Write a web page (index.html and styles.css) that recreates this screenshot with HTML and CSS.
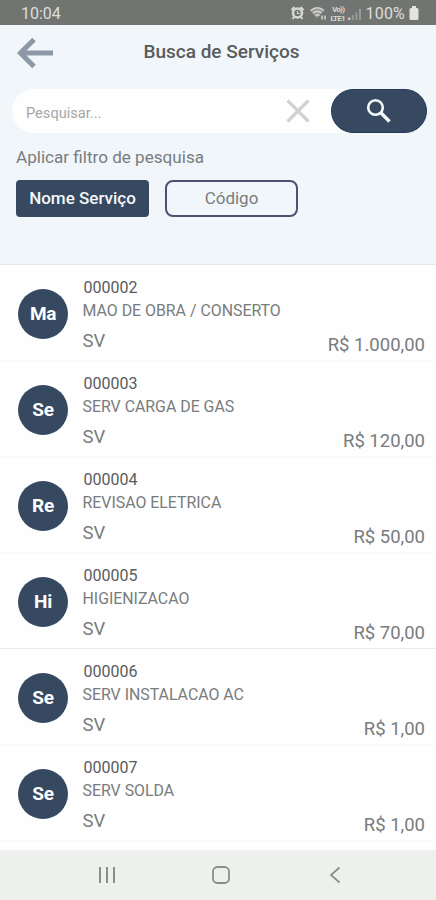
FILE: index.html
```html
<!DOCTYPE html>
<html lang="pt-BR">
<head>
<meta charset="utf-8">
<title>Busca de Serviços</title>
<link rel="stylesheet" href="styles.css">
</head>
<body>
<div class="status">
  <span class="clock">10:04</span>
  <svg class="status-icons" width="74" height="18" viewBox="0 0 74 18" fill="none" stroke="#d6d8d5">
    <circle cx="8.500" cy="10" r="4.500" stroke-width="2.600"/>
    <path d="M2.500 7 5.500 4M14.500 7l-3-3M5 14l-1.500 2M12 14l1.500 2" stroke-width="2"/>
    <path d="M8.500 8v2.500h2" stroke-width="1.200"/>
    <path d="M21.500 7.500q7-5.500 13.500 0M24 10q4.500-3.500 8.500 0M26.500 12.500q2-1.500 4 0" stroke-width="1.400"/>
    <path d="M28 15.500 21.500 8q7-4.500 13 0z" fill="#d6d8d5" stroke="none" opacity=".4"/>
    <path d="M33 12.500v4M36 12.500v4" stroke-width="1.500"/>
    <text class="volte" x="43" y="9" textLength="13">Vo))</text>
    <text class="volte" x="41.500" y="17.500" textLength="15">LTE1</text>
    <path d="M60.200 17v-2.500" stroke-width="2"/>
    <path d="M63.800 17v-5M67.400 17V9.500M71 17V6" stroke-width="2" stroke="#979a96"/>
  </svg>
  <span class="percent">100%</span>
  <svg width="10" height="16" viewBox="0 0 10 16"><path fill="#e2e4e1" d="M3 1h4v2h1q1.500 0 1.500 1.500v9Q9.500 15 8 15H2Q.5 15 .5 13.500v-9Q.5 3 2 3h1z"/></svg>
</div>

<header class="header">
  <div class="title-bar">
    <svg class="back" width="38" height="32" viewBox="0 0 38 32" fill="none" stroke="#8d98a6" stroke-width="5"><path d="M18 2.500 4.500 16 18 29.500M5 16h32"/></svg>
    <h1>Busca de Serviços</h1>
  </div>
  <div class="search">
    <span class="placeholder">Pesquisar...</span>
    <svg class="clear" width="24" height="24" viewBox="0 0 24 24" stroke="#d0d1d0" stroke-width="3.200"><path d="M1.500 1.500l21 21M22.500 1.500l-21 21"/></svg>
    <div class="search-button">
      <svg width="26" height="26" viewBox="0 0 26 26" fill="none" stroke="#f5f8fa"><circle cx="9.500" cy="9.500" r="7.300" stroke-width="2.600"/><path d="M14.800 14.800l8.700 8.700" stroke-width="3.400"/></svg>
    </div>
  </div>
  <p class="filter-label">Aplicar filtro de pesquisa</p>
  <div class="filters">
    <div class="filter active">Nome Serviço</div>
    <div class="filter">Código</div>
  </div>
</header>

<main class="list">
  <article class="item"><div class="avatar">Ma</div><div class="info"><div class="code">000002</div><div class="name">MAO DE OBRA / CONSERTO</div><div class="unit">SV</div></div><div class="price">R$ 1.000,00</div></article>
  <article class="item"><div class="avatar">Se</div><div class="info"><div class="code">000003</div><div class="name">SERV CARGA DE GAS</div><div class="unit">SV</div></div><div class="price">R$ 120,00</div></article>
  <article class="item"><div class="avatar">Re</div><div class="info"><div class="code">000004</div><div class="name">REVISAO ELETRICA</div><div class="unit">SV</div></div><div class="price">R$ 50,00</div></article>
  <article class="item ruled"><div class="avatar">Hi</div><div class="info"><div class="code">000005</div><div class="name">HIGIENIZACAO</div><div class="unit">SV</div></div><div class="price">R$ 70,00</div></article>
  <article class="item"><div class="avatar">Se</div><div class="info"><div class="code">000006</div><div class="name">SERV INSTALACAO AC</div><div class="unit">SV</div></div><div class="price">R$ 1,00</div></article>
  <article class="item"><div class="avatar">Se</div><div class="info"><div class="code">000007</div><div class="name">SERV SOLDA</div><div class="unit">SV</div></div><div class="price">R$ 1,00</div></article>
</main>

<nav class="nav">
  <svg width="18" height="18" viewBox="0 0 18 18" stroke="#8b8d8b" stroke-width="2"><path d="M2 1v16M9 1v16M16 1v16"/></svg>
  <svg width="18" height="18" viewBox="0 0 18 18" fill="none" stroke="#8b8d8b" stroke-width="1.800"><rect x="1" y="1" width="16" height="16" rx="4.500"/></svg>
  <svg width="18" height="18" viewBox="0 0 18 18" fill="none" stroke="#8b8d8b" stroke-width="1.800"><path d="M13.500 1.500 5 9l8.500 7.500"/></svg>
</nav>
</body>
</html>
```
FILE: styles.css
```css
* { box-sizing: border-box; }
body {
  margin: 0;
  width: 436px;
  height: 900px;
  overflow: hidden;
  display: flex;
  flex-direction: column;
  background: #fdfefd;
  font-family: Roboto, "Liberation Sans", sans-serif;
  color: #797c7e;
}
svg { display: block; flex: none; }
.status {
  height: 25px;
  flex: none;
  display: flex;
  align-items: center;
  padding: 1px 17px 0 21px;
  background: #727471;
  color: #dcdedb;
}
.clock { font-size: 16px; }
.status-icons { margin-left: auto; margin-top: -2px; }
.volte { font: 700 8px Roboto, sans-serif; fill: #d6d8d5; stroke: none; }
.percent { font-size: 16px; letter-spacing: .2px; margin: 0 4px 0 3px; }

.header {
  height: 240px;
  flex: none;
  background: #f1f6fb;
  border-bottom: 1px solid #e2e7e9;
}
.title-bar {
  height: 64px;
  display: grid;
  grid-template-columns: 55px 1fr 48px;
  align-items: start;
}
.back { margin: 12px 0 0 16px; }
h1 {
  margin: 15px 0 0;
  text-align: center;
  font-size: 19px;
  line-height: 23px;
  font-weight: 500;
  color: #595b5d;
  white-space: nowrap;
}
.search {
  display: flex;
  align-items: center;
  height: 44px;
  margin: 0 9px 0 12px;
  border-radius: 22px;
  background: #fdfefd;
}
.placeholder {
  flex: 1;
  padding: 4px 0 0 14px;
  font-size: 14.600px;
  color: #a6a7a6;
}
.clear { margin-right: 21px; }
.search-button {
  width: 96px;
  height: 44px;
  border-radius: 22px;
  background: #364961;
  border: 1px solid #263a5b;
  display: flex;
  align-items: center;
  justify-content: center;
}
.filter-label {
  margin: 14px 0 0 16px;
  font-size: 17.100px;
  line-height: 20px;
}
.filters { display: flex; gap: 16px; margin: 13px 0 0 16px; }
.filter {
  width: 133px;
  height: 37px;
  padding-bottom: 1px;
  border: 2px solid #495475;
  border-radius: 8px;
  display: flex;
  align-items: center;
  justify-content: center;
  font-size: 17px;
}
.filter.active {
  background: #364961;
  border-color: #364961;
  border-radius: 4px;
  font-weight: 500;
  color: #f3f6f8;
}

.list { flex: 1; min-height: 0; }
.item {
  height: 96px;
  display: flex;
  padding: 1px 11px 0 18px;
  border-bottom: 1px solid #f8f9f8;
}
.item.ruled { border-bottom-color: #e9ebea; }
.avatar {
  width: 50px;
  height: 50px;
  margin-top: 23px;
  border-radius: 50%;
  background: #364961;
  color: #fdfefe;
  font-size: 19px;
  font-weight: 700;
  letter-spacing: -.3px;
  line-height: 50px;
  text-align: center;
}
.info { flex: 1; padding: 12px 0 0 14.500px; white-space: nowrap; }
.code { font-size: 16px; line-height: 20px; padding-left: 1px; color: #595b5d; }
.name { font-size: 15.880px; line-height: 20px; margin-top: 3px; }
.unit { font-size: 18.500px; line-height: 22px; margin-top: 9px; }
.price { font-size: 18.500px; line-height: 22px; margin-top: 68px; white-space: nowrap; }

.nav {
  height: 50px;
  flex: none;
  display: flex;
  justify-content: space-between;
  align-items: center;
  padding: 0 92px 0 98px;
  background: #eef0ee;
}
```
